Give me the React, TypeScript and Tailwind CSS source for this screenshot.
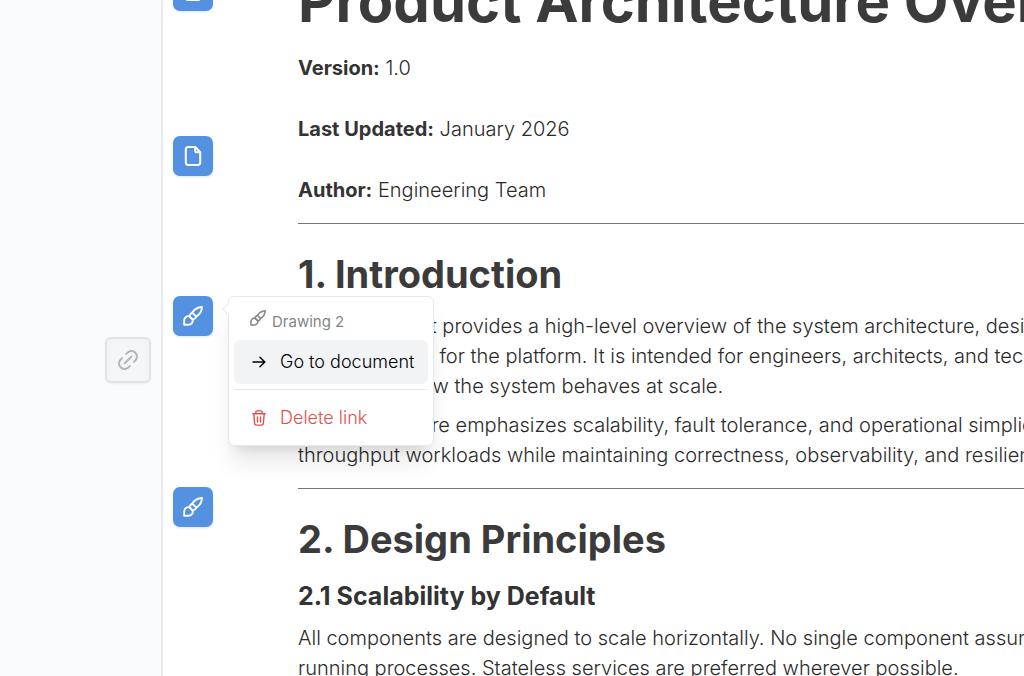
import type { ReactNode } from 'react';

// ─── Icons ────────────────────────────────────────────────────────────────────

type IconProps = { className?: string };

function BrushIcon({ className }: IconProps) {
  return (
    <svg viewBox="0 0 20 20" className={className} fill="none" stroke="currentColor" strokeWidth="1.9" strokeLinejoin="round" aria-hidden="true">
      <path d="M19 1C14.8 1.3 11.3 3.3 9.3 6.6L13.2 10.7C16.8 8.5 18.8 5.4 19 1Z" />
      <path d="M9.3 6.6C7.7 7.3 6.7 8.5 6.4 10.2L9.7 13.6C11.5 13.3 12.7 12.4 13.2 10.7" />
      <path d="M6.4 10.2C3.3 9.9 1.2 11.8 1.2 14.7V18.8H5.3C8.2 18.8 10.1 16.6 9.7 13.6Z" />
    </svg>
  );
}

function FileIcon({ className }: IconProps) {
  return (
    <svg viewBox="0 0 20 20" className={className} fill="none" stroke="currentColor" strokeWidth="2" strokeLinejoin="round" aria-hidden="true">
      <path d="M12.2 1H5.2C3.6 1 2.8 1.8 2.8 3.4V16.6C2.8 18.2 3.6 19 5.2 19H14.8C16.4 19 17.2 18.2 17.2 16.6V6.2Z" />
      <path d="M12.2 1V5C12.2 5.7 12.6 6.2 13.3 6.2H17.2" />
    </svg>
  );
}

function LinkIcon({ className }: IconProps) {
  return (
    <svg viewBox="0 0 20 20" className={className} fill="none" stroke="currentColor" strokeWidth="2" strokeLinecap="round" aria-hidden="true">
      <path d="M8.3 3.9L9.6 2.6C11.8.5 15.2.5 17.3 2.7C19.5 4.8 19.5 8.2 17.4 10.4L16.1 11.7" />
      <path d="M11.7 16.1L10.4 17.4C8.2 19.5 4.8 19.5 2.7 17.3C.5 15.2.5 11.8 2.6 9.6L3.9 8.3" />
      <path d="M6.6 13.4L13.4 6.6" />
    </svg>
  );
}

function ArrowIcon({ className }: IconProps) {
  return (
    <svg viewBox="0 0 14 14" className={className} fill="none" stroke="currentColor" strokeWidth="1.5" strokeLinecap="round" strokeLinejoin="round" aria-hidden="true">
      <path d="M1 7H12.6M8 2.2L12.8 7L8 11.8" />
    </svg>
  );
}

function TrashIcon({ className }: IconProps) {
  return (
    <svg viewBox="0 0 14 16" className={className} fill="none" stroke="currentColor" strokeWidth="1.4" strokeLinecap="round" strokeLinejoin="round" aria-hidden="true">
      <path d="M.8 3.7H13.2M3.8 3.5V2.2C3.8 1.3 4.2.9 5.1.9H8.9C9.8.9 10.2 1.3 10.2 2.2V3.5" />
      <path d="M1.8 3.9L2.6 13.4C2.7 14.5 3.3 15.1 4.4 15.1H9.6C10.7 15.1 11.3 14.5 11.4 13.4L12.2 3.9" />
      <path d="M5.5 6.9V12M8.5 6.9V12" />
    </svg>
  );
}

// ─── Link rail ────────────────────────────────────────────────────────────────

function LinkMarker({ label, children }: { label: string; children: ReactNode }) {
  return (
    <button
      type="button"
      aria-label={label}
      className="flex size-10 shrink-0 items-center justify-center rounded-[7px] bg-[#5591e1] text-white shadow-sm shadow-blue-100"
    >
      {children}
    </button>
  );
}

function LinkMenu() {
  return (
    <div role="menu" className="absolute top-0 left-[55px] z-10 w-[206px] rounded-md border border-[#e8e8e8] bg-white px-[5px] pt-[11px] pb-1 shadow-xl shadow-black/10">
      <span className="absolute top-2 -left-[5px] size-2 rotate-45 border-b border-l border-[#e8e8e8] bg-white" />
      <p className="flex h-8 items-start gap-1.5 pl-4 text-[15px] leading-7 text-[#858585]">
        <BrushIcon className="mt-0.5 size-4" />
        Drawing 2
      </p>
      <button type="button" role="menuitem" className="flex h-11 w-full items-center gap-3.5 rounded-md bg-[#f1f3f5] pl-[18px] text-lg font-light text-black">
        <ArrowIcon className="size-3.5" />
        Go to document
      </button>
      <hr className="my-[5px] border-[#e5e7e9]" />
      <button type="button" role="menuitem" className="flex h-[46px] w-full items-center gap-3.5 rounded-md pl-[18px] text-lg font-light text-[#e0524f]">
        <TrashIcon className="h-4 w-3.5" />
        Delete link
      </button>
    </div>
  );
}

function LinkRail() {
  return (
    <div className="w-[135px] shrink-0 pl-2.5">
      <div className="-mt-[29px] flex flex-col items-start">
        <LinkMarker label="Document link">
          <FileIcon className="size-5" />
        </LinkMarker>
        <div className="mt-[125px]">
          <LinkMarker label="Document link">
            <FileIcon className="size-5" />
          </LinkMarker>
        </div>
        <div className="relative mt-[120px]">
          <LinkMarker label="Drawing 2">
            <BrushIcon className="size-5" />
          </LinkMarker>
          <LinkMenu />
        </div>
        <div className="mt-[151px]">
          <LinkMarker label="Drawing link">
            <BrushIcon className="size-5" />
          </LinkMarker>
        </div>
      </div>
    </div>
  );
}

// ─── Document ─────────────────────────────────────────────────────────────────

const meta = [
  { label: 'Version:', value: '1.0' },
  { label: 'Last Updated:', value: 'January 2026' },
  { label: 'Author:', value: 'Engineering Team' },
];

function Paragraph({ lines }: { lines: string[] }) {
  return (
    <p className="mb-[9px] text-xl leading-[30px] font-light">
      {lines.map((line) => (
        <span key={line} className="block">{line}</span>
      ))}
    </p>
  );
}

function Document() {
  return (
    <article className="-mt-[35px] min-w-0 flex-1 overflow-hidden whitespace-nowrap text-[#2b2b2b]">
      <h1 className="mb-4 text-[58px] leading-[72px] font-bold text-[#3b3b3b]">Product Architecture Overview</h1>
      {meta.map(({ label, value }) => (
        <p key={label} className="mb-[31px] text-xl leading-[30px] font-light">
          <strong className="font-bold text-[#333]">{label}</strong> {value}
        </p>
      ))}
      <hr className="-mt-[13px] border-[#777]" />
      <h2 className="mt-6 mb-[11px] text-[38px] leading-[52px] font-bold text-[#3b3b3b]">1. Introduction</h2>
      <Paragraph
        lines={[
          'This document provides a high-level overview of the system architecture, design',
          'and data flows for the platform. It is intended for engineers, architects, and technical',
          'understand how the system behaves at scale.',
        ]}
      />
      <Paragraph
        lines={[
          'The architecture emphasizes scalability, fault tolerance, and operational simplicity',
          'throughput workloads while maintaining correctness, observability, and resilience',
        ]}
      />
      <hr className="mt-[18px] border-[#777]" />
      <h2 className="mt-6 mb-[15px] text-[38px] leading-[52px] font-bold text-[#3b3b3b]">2. Design Principles</h2>
      <h3 className="mb-[11px] text-[25px] leading-8 font-bold text-[#333]">2.1 Scalability by Default</h3>
      <Paragraph
        lines={[
          'All components are designed to scale horizontally. No single component assumes',
          'running processes. Stateless services are preferred wherever possible.',
        ]}
      />
    </article>
  );
}

export default function App() {
  return (
    <main className="flex h-screen overflow-hidden bg-white font-['Inter',sans-serif]">
      <aside className="flex w-[163px] shrink-0 items-start justify-end border-r-2 border-[#e8e9eb] bg-[#f8fafc] pt-[337px] pr-2.5">
        <button
          type="button"
          aria-label="Add link"
          className="flex size-[46px] items-center justify-center rounded-md border-2 border-[#e2e3e5] bg-[#f4f5f7] text-[#b3b3b3] shadow-xs"
        >
          <LinkIcon className="size-5" />
        </button>
      </aside>
      <LinkRail />
      <Document />
    </main>
  );
}
